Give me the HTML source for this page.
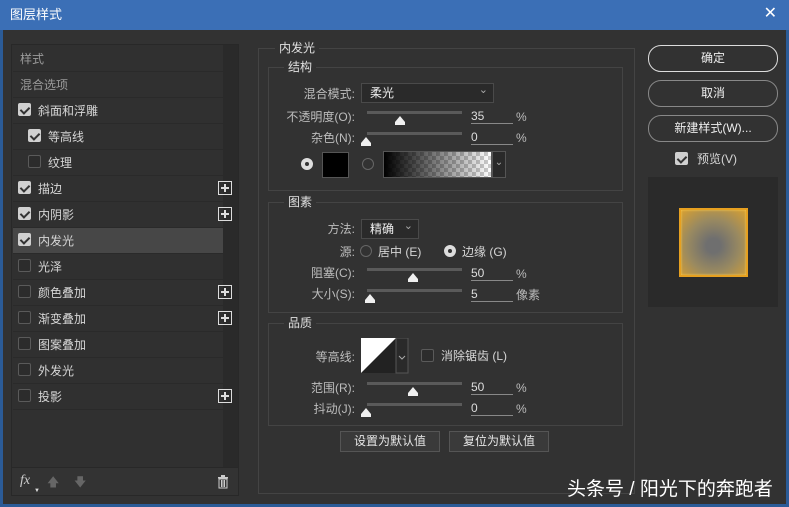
<!DOCTYPE html>
<html><head><meta charset="utf-8"><style>
*{margin:0;padding:0;box-sizing:border-box}
body{width:789px;height:507px;background:#2b5b97;font-family:"Liberation Sans","Noto Sans CJK SC",sans-serif;font-size:12px;line-height:14px;color:#d6d6d6;position:relative;overflow:hidden}
.a{position:absolute}
#title{left:0;top:0;width:789px;height:30px;background:#3b6fb6;color:#fff;font-size:13px;line-height:30px;padding-left:10px}
#main{left:3px;top:30px;width:783px;height:474px;background:#323232}
.t{position:absolute;white-space:nowrap}
.cb{position:absolute;width:13px;height:13px;border:1px solid #5a5a5a;background:#2c2c2c;border-radius:2px}
.cb.on{background:#d0d0d0;border-color:#d0d0d0}
.cb.on::after{content:"";position:absolute;left:3px;top:1px;width:4px;height:7px;border:solid #333;border-width:0 2px 2px 0;transform:rotate(45deg)}
.row{position:absolute;left:13px;width:210px;height:26px;border-bottom:1px solid #2a2a2a}
.plus{position:absolute;left:205px;width:14px;height:14px;border:1px solid #ddd}
.plus::before{content:"";position:absolute;left:2px;top:5px;width:8px;height:2px;background:#ddd}
.plus::after{content:"";position:absolute;left:5px;top:2px;width:2px;height:8px;background:#ddd}
.grp{position:absolute;border:1px solid #444}
.gl{position:absolute;background:#323232;padding:0 4px;color:#e0e0e0;font-size:12px}
.lbl{position:absolute;text-align:right;color:#bdbdbd;width:90px}
.trk{position:absolute;left:367px;width:95px;height:3px;background:#5a5a5a}
.thumb{position:absolute;width:0;height:0;border-left:5px solid transparent;border-right:5px solid transparent;border-bottom:6px solid #f0f0f0}
.thumb::after{content:"";position:absolute;left:-5px;top:6px;width:10px;height:3px;background:#f0f0f0}
.val{position:absolute;left:471px;width:42px;border-bottom:1px solid #888;color:#ddd;height:15px;line-height:14px}
.pct{position:absolute;left:516px;color:#bbb}
.btn{position:absolute;border:1px solid #555;background:#3a3a3a;color:#e6e6e6;text-align:center;line-height:19px;font-size:12px}
.rb{position:absolute;left:648px;width:130px;height:27px;border:1px solid #b8b8b8;border-radius:13px;color:#eee;text-align:center;line-height:25px;font-size:12px}
.radio{position:absolute;width:12px;height:12px;border-radius:50%;border:1px solid #666}
.radio.on{background:#ddd;border-color:#ddd}
.radio.on::after{content:"";position:absolute;left:3px;top:3px;width:4px;height:4px;border-radius:50%;background:#333}
.dd{position:absolute;border:1px solid #4a4a4a;background:#2a2a2a;color:#eee;padding-left:8px;line-height:18px}
.dd::after{content:"⌄";position:absolute;right:5px;top:-3px;color:#aaa;font-size:11px}
</style></head><body>
<div id="title" class="a">图层样式</div>
<div class="a t" style="right:12px;top:7px;color:#fff;font-size:16px">✕</div>
<div id="main" class="a"></div>

<div class="a" style="left:11px;top:44px;width:228px;height:452px;border:1px solid #282828;background:#303030"></div>
<div class="a" style="left:223px;top:45px;width:15px;height:422px;background:#2a2a2a"></div>
<div class="a" style="left:12px;top:467px;width:226px;height:28px;background:#333;border-top:1px solid #282828"></div>

<div class="row" style="top:46px"><span class="t" style="left:7px;top:6px;color:#9a9a9a">样式</span></div>
<div class="row" style="top:72px"><span class="t" style="left:7px;top:6px;color:#9a9a9a">混合选项</span></div>
<div class="row" style="top:98px"><div class="cb on" style="left:5px;top:5px"></div><span class="t" style="left:25px;top:6px">斜面和浮雕</span></div>
<div class="row" style="top:124px"><div class="cb on" style="left:15px;top:5px"></div><span class="t" style="left:35px;top:6px">等高线</span></div>
<div class="row" style="top:150px"><div class="cb" style="left:15px;top:5px"></div><span class="t" style="left:35px;top:6px">纹理</span></div>
<div class="row" style="top:176px"><div class="cb on" style="left:5px;top:5px"></div><span class="t" style="left:25px;top:6px">描边</span><div class="plus" style="top:5px"></div></div>
<div class="row" style="top:202px"><div class="cb on" style="left:5px;top:5px"></div><span class="t" style="left:25px;top:6px">内阴影</span><div class="plus" style="top:5px"></div></div>
<div class="row" style="top:228px;background:#474747"><div class="cb on" style="left:5px;top:5px"></div><span class="t" style="left:25px;top:6px">内发光</span></div>
<div class="row" style="top:254px"><div class="cb" style="left:5px;top:5px"></div><span class="t" style="left:25px;top:6px">光泽</span></div>
<div class="row" style="top:280px"><div class="cb" style="left:5px;top:5px"></div><span class="t" style="left:25px;top:6px">颜色叠加</span><div class="plus" style="top:5px"></div></div>
<div class="row" style="top:306px"><div class="cb" style="left:5px;top:5px"></div><span class="t" style="left:25px;top:6px">渐变叠加</span><div class="plus" style="top:5px"></div></div>
<div class="row" style="top:332px"><div class="cb" style="left:5px;top:5px"></div><span class="t" style="left:25px;top:6px">图案叠加</span></div>
<div class="row" style="top:358px"><div class="cb" style="left:5px;top:5px"></div><span class="t" style="left:25px;top:6px">外发光</span></div>
<div class="row" style="top:384px"><div class="cb" style="left:5px;top:5px"></div><span class="t" style="left:25px;top:6px">投影</span><div class="plus" style="top:5px"></div></div>

<span class="t" style="left:20px;top:474px;font-style:italic;font-family:'Liberation Serif',serif;font-size:14px;color:#ccc">fx</span>
<span class="t" style="left:34px;top:484px;font-size:6px;color:#ddd">▼</span>
<span class="t" style="left:47px;top:475px;color:#666">🡅</span>
<span class="t" style="left:74px;top:475px;color:#666">🡇</span>
<svg class="a" style="left:217px;top:475px" width="12" height="14"><rect x="1" y="2" width="10" height="1.5" fill="#ccc"/><rect x="4" y="0" width="4" height="2" fill="#ccc"/><rect x="2" y="4" width="8" height="9" fill="none" stroke="#ccc"/><path d="M4.5 5v7M6 5v7M7.5 5v7" stroke="#ccc"/></svg>

<div class="grp" style="left:258px;top:48px;width:377px;height:446px"></div>
<span class="gl" style="left:275px;top:41px">内发光</span>
<div class="grp" style="left:268px;top:67px;width:355px;height:124px"></div>
<span class="gl" style="left:284px;top:60px">结构</span>
<div class="lbl" style="left:265px;top:87px">混合模式:</div>
<div class="dd" style="left:361px;top:83px;width:133px;height:20px">柔光</div>
<div class="lbl" style="left:265px;top:110px">不透明度(O):</div>
<div class="trk" style="top:111px"></div><div class="thumb" style="left:395px;top:116px"></div>
<div class="val" style="top:109px">35</div><span class="pct" style="top:110px">%</span>
<div class="lbl" style="left:265px;top:131px">杂色(N):</div>
<div class="trk" style="top:132px"></div><div class="thumb" style="left:361px;top:137px"></div>
<div class="val" style="top:130px">0</div><span class="pct" style="top:131px">%</span>
<div class="radio on" style="left:301px;top:158px"></div>
<div class="a" style="left:322px;top:152px;width:27px;height:26px;background:#000;border:1px solid #555"></div>
<div class="radio" style="left:362px;top:158px"></div>
<div class="a" style="left:383px;top:151px;width:109px;height:27px;border:1px solid #555;background:linear-gradient(90deg,#000,rgba(0,0,0,0)),repeating-conic-gradient(#ccc 0 25%,#fff 0 50%) 0 0/8px 8px"></div>
<div class="a" style="left:492px;top:151px;width:14px;height:27px;border:1px solid #555;background:#2a2a2a;color:#aaa;font-size:10px;text-align:center;line-height:22px">⌄</div>

<div class="grp" style="left:268px;top:202px;width:355px;height:111px"></div>
<span class="gl" style="left:284px;top:195px">图素</span>
<div class="lbl" style="left:265px;top:222px">方法:</div>
<div class="dd" style="left:361px;top:219px;width:58px;height:20px">精确</div>
<div class="lbl" style="left:265px;top:245px">源:</div>
<div class="radio" style="left:360px;top:245px"></div><span class="t" style="left:378px;top:245px">居中 (E)</span>
<div class="radio on" style="left:444px;top:245px"></div><span class="t" style="left:462px;top:245px">边缘 (G)</span>
<div class="lbl" style="left:265px;top:266px">阻塞(C):</div>
<div class="trk" style="top:268px"></div><div class="thumb" style="left:408px;top:273px"></div>
<div class="val" style="top:266px">50</div><span class="pct" style="top:267px">%</span>
<div class="lbl" style="left:265px;top:287px">大小(S):</div>
<div class="trk" style="top:289px"></div><div class="thumb" style="left:365px;top:294px"></div>
<div class="val" style="top:287px">5</div><span class="pct" style="top:288px">像素</span>

<div class="grp" style="left:268px;top:323px;width:355px;height:103px"></div>
<span class="gl" style="left:284px;top:316px">品质</span>
<div class="lbl" style="left:265px;top:350px">等高线:</div>
<svg class="a" style="left:361px;top:338px" width="48" height="36"><rect x="0" y="0" width="35" height="35" fill="#fff"/><path d="M0 35L35 0V35Z" fill="#222"/><rect x="35" y="0" width="12" height="35" fill="#2a2a2a" stroke="#555"/><path d="M38 18l3 3 3-3" stroke="#aaa" fill="none"/></svg>
<div class="cb" style="left:421px;top:349px"></div><span class="t" style="left:441px;top:349px">消除锯齿 (L)</span>
<div class="lbl" style="left:265px;top:381px">范围(R):</div>
<div class="trk" style="top:382px"></div><div class="thumb" style="left:408px;top:387px"></div>
<div class="val" style="top:380px">50</div><span class="pct" style="top:381px">%</span>
<div class="lbl" style="left:265px;top:402px">抖动(J):</div>
<div class="trk" style="top:403px"></div><div class="thumb" style="left:361px;top:408px"></div>
<div class="val" style="top:401px">0</div><span class="pct" style="top:402px">%</span>
<div class="btn" style="left:340px;top:431px;width:100px;height:21px">设置为默认值</div>
<div class="btn" style="left:449px;top:431px;width:100px;height:21px">复位为默认值</div>

<div class="rb" style="top:45px;border-color:#ddd">确定</div>
<div class="rb" style="top:80px;border-color:#888">取消</div>
<div class="rb" style="top:115px;border-color:#888">新建样式(W)...</div>
<div class="cb on" style="left:675px;top:152px"></div><span class="t" style="left:697px;top:152px">预览(V)</span>
<div class="a" style="left:648px;top:177px;width:130px;height:130px;background:#2a2a2a"></div>
<div class="a" style="left:679px;top:208px;width:69px;height:69px;border:2px solid #e6a020;background:radial-gradient(circle at 50% 55%,#6f6f6f 15%,#9a8a60 55%,#d9a030 100%);box-shadow:inset 0 0 2px #ffcf50"></div>

<span class="t" style="left:567px;top:480px;font-size:19px;line-height:20px;color:#fff">头条号 / 阳光下的奔跑者</span>
</body></html>
